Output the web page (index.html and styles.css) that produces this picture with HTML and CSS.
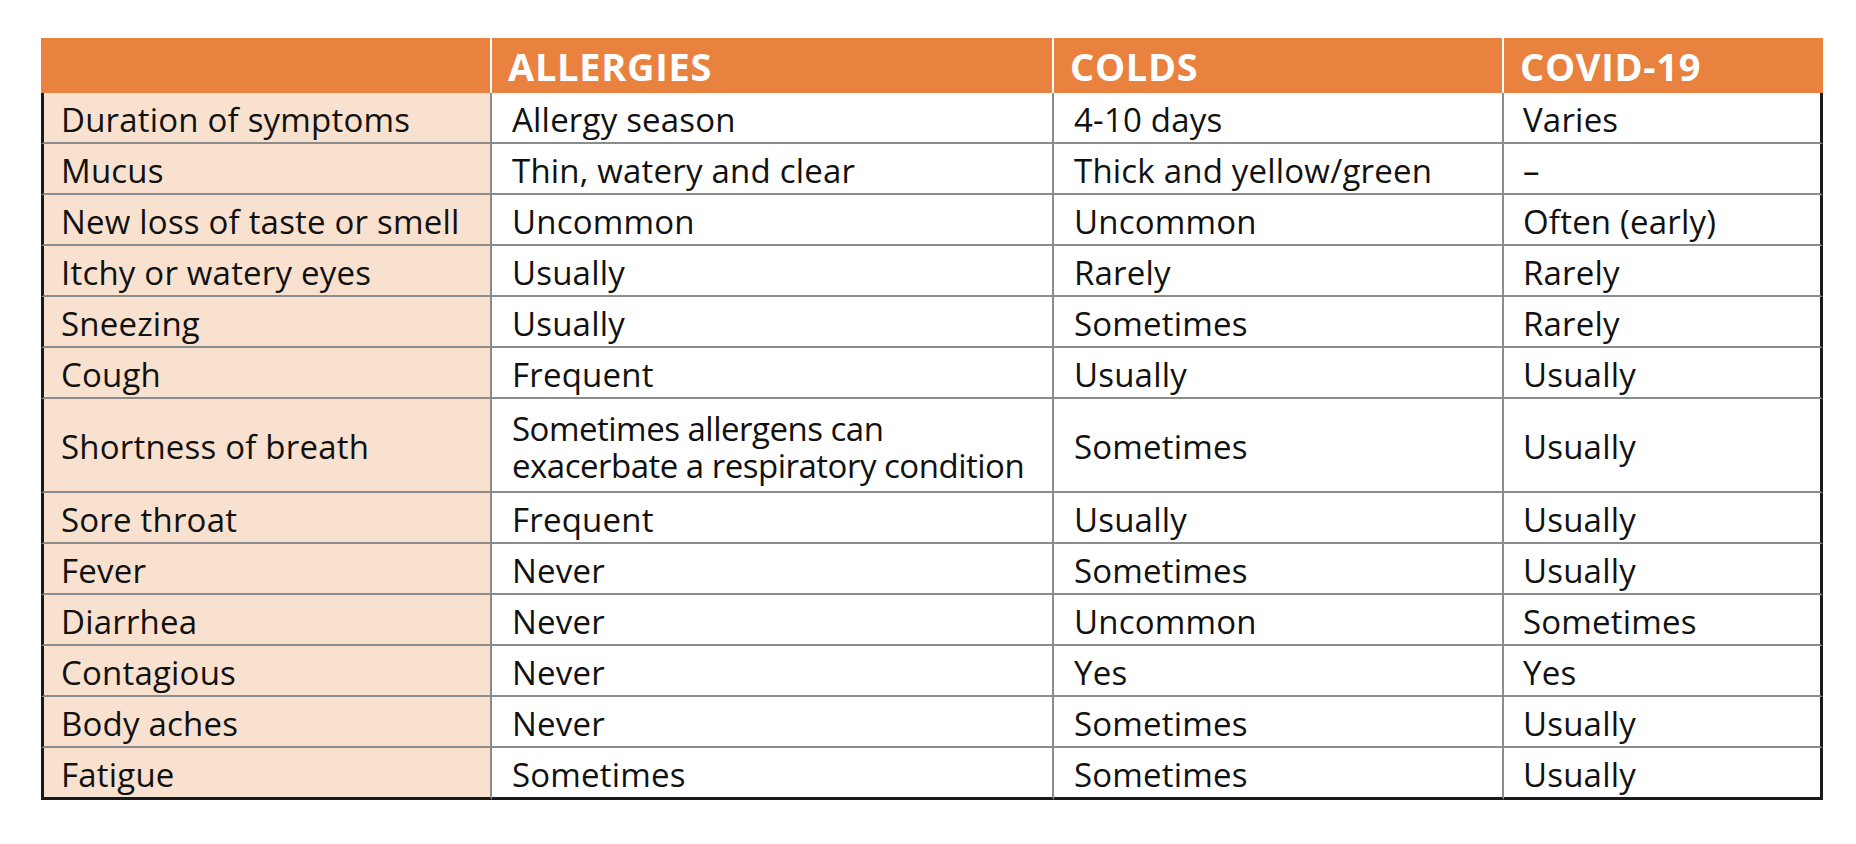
FILE: index.html
```html
<!DOCTYPE html>
<html lang="en">
<head>
<meta charset="utf-8">
<title>Allergies vs Colds vs COVID-19</title>
<link rel="stylesheet" href="styles.css">
</head>
<body>
<div class="chart">
  <div class="hcell first"></div>
  <div class="hcell">ALLERGIES</div>
  <div class="hcell">COLDS</div>
  <div class="hcell last">COVID-19</div>

  <div class="cell label">Duration of symptoms</div><div class="cell">Allergy season</div><div class="cell">4-10 days</div><div class="cell end">Varies</div>
  <div class="cell label">Mucus</div><div class="cell">Thin, watery and clear</div><div class="cell">Thick and yellow/green</div><div class="cell end">–</div>
  <div class="cell label">New loss of taste or smell</div><div class="cell">Uncommon</div><div class="cell">Uncommon</div><div class="cell end">Often (early)</div>
  <div class="cell label">Itchy or watery eyes</div><div class="cell">Usually</div><div class="cell">Rarely</div><div class="cell end">Rarely</div>
  <div class="cell label">Sneezing</div><div class="cell">Usually</div><div class="cell">Sometimes</div><div class="cell end">Rarely</div>
  <div class="cell label">Cough</div><div class="cell">Frequent</div><div class="cell">Usually</div><div class="cell end">Usually</div>
  <div class="cell label tall">Shortness of breath</div><div class="cell tall two">Sometimes allergens can<br>exacerbate a respiratory condition</div><div class="cell tall">Sometimes</div><div class="cell end tall">Usually</div>
  <div class="cell label">Sore throat</div><div class="cell">Frequent</div><div class="cell">Usually</div><div class="cell end">Usually</div>
  <div class="cell label">Fever</div><div class="cell">Never</div><div class="cell">Sometimes</div><div class="cell end">Usually</div>
  <div class="cell label">Diarrhea</div><div class="cell">Never</div><div class="cell">Uncommon</div><div class="cell end">Sometimes</div>
  <div class="cell label">Contagious</div><div class="cell">Never</div><div class="cell">Yes</div><div class="cell end">Yes</div>
  <div class="cell label">Body aches</div><div class="cell">Never</div><div class="cell">Sometimes</div><div class="cell end">Usually</div>
  <div class="cell label bottom">Fatigue</div><div class="cell bottom">Sometimes</div><div class="cell bottom">Sometimes</div><div class="cell end bottom">Usually</div>
</div>
</body>
</html>
```

FILE: styles.css
```css
* { box-sizing: border-box; }

html, body {
  margin: 0;
  padding: 0;
  background: #ffffff;
}

body {
  padding: 38px 0 0 41px;
  font-family: "Open Sans", "Liberation Sans", sans-serif;
  color: #111111;
}

.chart {
  display: grid;
  grid-template-columns: 451px 562px 450px 319px;
  width: 1782px;
}

.hcell {
  height: 55px;
  background: #e9813f;
  color: #ffffff;
  font-weight: 700;
  font-size: 38px;
  line-height: 42px;
  letter-spacing: 0.7px;
  padding: 1px 10px 0 16px;
  display: flex;
  align-items: center;
  border-right: 2px solid #ffffff;
  white-space: nowrap;
}

.hcell.last { border-right: 0; }

.cell {
  height: 51px;
  font-size: 33px;
  line-height: 36px;
  letter-spacing: 0.2px;
  padding: 4px 6px 0 20px;
  display: flex;
  align-items: center;
  border-bottom: 2px solid #8c8c8c;
  border-right: 2px solid #8c8c8c;
  background: #ffffff;
  white-space: nowrap;
}

.cell.label {
  background: #f9e1d0;
  border-left: 3px solid #1a1a1a;
  padding-left: 17px;
}

.cell.end {
  border-right: 3px solid #1a1a1a;
  padding-left: 19px;
}

.cell.tall { height: 94px; }

.cell.two {
  letter-spacing: -0.5px;
  line-height: 37px;
}

.cell.bottom {
  height: 52px;
  border-bottom: 3px solid #1a1a1a;
}
```
